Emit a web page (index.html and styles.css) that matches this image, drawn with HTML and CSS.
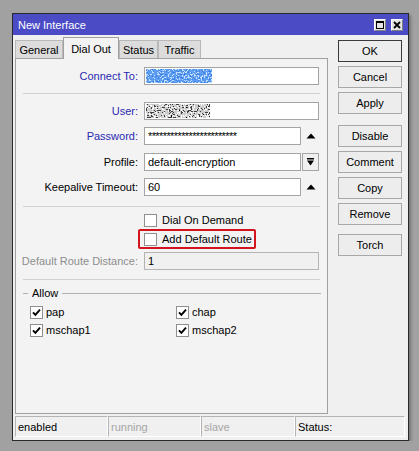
FILE: index.html
```html
<!DOCTYPE html>
<html>
<head>
<meta charset="utf-8">
<title>New Interface</title>
<link rel="stylesheet" href="styles.css">
</head>
<body>
<div class="window">
  <div class="titlebar">
    <span class="title">New Interface</span>
    <svg class="tb-btn" width="12" height="12" viewBox="0 0 12 12">
      <rect x="0" y="0" width="12" height="12" fill="#e4e4e4"/>
      <path d="M0.5 11.5 V0.5 H11.5" fill="none" stroke="#fff"/>
      <path d="M0.5 11.5 H11.5 V0.5" fill="none" stroke="#808080"/>
      <rect x="2.5" y="2.5" width="7" height="7" fill="none" stroke="#000"/>
      <rect x="2" y="2" width="8" height="2" fill="#000"/>
    </svg>
    <svg class="tb-btn" width="12" height="12" viewBox="0 0 12 12">
      <rect x="0" y="0" width="12" height="12" fill="#e4e4e4"/>
      <path d="M0.5 11.5 V0.5 H11.5" fill="none" stroke="#fff"/>
      <path d="M0.5 11.5 H11.5 V0.5" fill="none" stroke="#808080"/>
      <path d="M3 3 L9 9 M9 3 L3 9" stroke="#000" stroke-width="1.8"/>
    </svg>
  </div>

  <div class="content">
    <div class="left">
      <div class="tabs">
        <div class="tab tab-general">General</div>
        <div class="tab tab-dial active">Dial Out</div>
        <div class="tab tab-status">Status</div>
        <div class="tab tab-traffic">Traffic</div>
      </div>

      <div class="panel">
        <div class="row">
          <span class="lbl blue">Connect To:</span>
          <div class="field noisy">
            <svg width="66" height="14" viewBox="0 0 66 14">
              <filter id="noise-blue" x="0" y="0" width="100%" height="100%" color-interpolation-filters="sRGB">
                <feTurbulence type="fractalNoise" baseFrequency="0.6" numOctaves="2" seed="7"/>
                <feColorMatrix type="matrix" values="1 0 0 0 0  1 0 0 0 0  1 0 0 0 0  0 0 0 0 1"/>
                <feComponentTransfer>
                  <feFuncR type="discrete" tableValues="0.15 0.25 0.38 0.78 1"/>
                  <feFuncG type="discrete" tableValues="0.42 0.52 0.62 0.88 1"/>
                  <feFuncB type="discrete" tableValues="0.85 0.9 0.96 1 1"/>
                </feComponentTransfer>
              </filter>
              <rect width="66" height="14" filter="url(#noise-blue)"/>
            </svg>
          </div>
        </div>

        <div class="sep sep-top"></div>

        <div class="row gap8">
          <span class="lbl blue">User:</span>
          <div class="field noisy">
            <svg width="64" height="14" viewBox="0 0 64 14">
              <filter id="noise-gray" x="0" y="0" width="100%" height="100%" color-interpolation-filters="sRGB">
                <feTurbulence type="fractalNoise" baseFrequency="0.6" numOctaves="2" seed="3"/>
                <feColorMatrix type="matrix" values="1 0 0 0 0  1 0 0 0 0  1 0 0 0 0  0 0 0 0 1"/>
                <feComponentTransfer>
                  <feFuncR type="discrete" tableValues="0 0.25 0.8 1 1"/>
                  <feFuncG type="discrete" tableValues="0 0.25 0.8 1 1"/>
                  <feFuncB type="discrete" tableValues="0 0.25 0.8 1 1"/>
                </feComponentTransfer>
              </filter>
              <rect width="64" height="14" filter="url(#noise-gray)"/>
            </svg>
          </div>
        </div>

        <div class="row gap7">
          <span class="lbl blue">Password:</span>
          <div class="field short"><span class="secret">************************</span></div>
          <div class="spin">
            <svg width="10" height="6" viewBox="0 0 10 6"><polygon points="0.5,5.5 9.5,5.5 5,0.5" fill="#000"/></svg>
          </div>
        </div>

        <div class="row gap8">
          <span class="lbl">Profile:</span>
          <div class="field short">default-encryption</div>
          <div class="spin drop">
            <svg width="7" height="8" viewBox="0 0 7 8"><rect x="0" y="0" width="7" height="1.5" fill="#000"/><polygon points="0,2.5 7,2.5 3.5,7.5" fill="#000"/></svg>
          </div>
        </div>

        <div class="row gap7">
          <span class="lbl">Keepalive Timeout:</span>
          <div class="field short">60</div>
          <div class="spin">
            <svg width="10" height="6" viewBox="0 0 10 6"><polygon points="0.5,5.5 9.5,5.5 5,0.5" fill="#000"/></svg>
          </div>
        </div>

        <div class="sep sep-mid"></div>

        <div class="check-line">
          <span class="box"></span><span class="check-text">Dial On Demand</span>
        </div>

        <div class="highlight">
          <span class="box"></span><span class="check-text">Add Default Route</span>
        </div>

        <div class="row gap3">
          <span class="lbl muted">Default Route Distance:</span>
          <div class="field disabled">1</div>
        </div>

        <div class="sep sep-low"></div>

        <div class="legend">Allow</div>

        <div class="allow">
          <div class="opt"><span class="box"><svg width="11" height="11" viewBox="0 0 11 11"><path d="M2 5.3 L4.4 7.8 L9 2.6" fill="none" stroke="#000" stroke-width="1.9"/></svg></span><span>pap</span></div>
          <div class="opt"><span class="box"><svg width="11" height="11" viewBox="0 0 11 11"><path d="M2 5.3 L4.4 7.8 L9 2.6" fill="none" stroke="#000" stroke-width="1.9"/></svg></span><span>chap</span></div>
          <div class="opt"><span class="box"><svg width="11" height="11" viewBox="0 0 11 11"><path d="M2 5.3 L4.4 7.8 L9 2.6" fill="none" stroke="#000" stroke-width="1.9"/></svg></span><span>mschap1</span></div>
          <div class="opt"><span class="box"><svg width="11" height="11" viewBox="0 0 11 11"><path d="M2 5.3 L4.4 7.8 L9 2.6" fill="none" stroke="#000" stroke-width="1.9"/></svg></span><span>mschap2</span></div>
        </div>
      </div>
    </div>

    <div class="buttons">
      <div class="btn default">OK</div>
      <div class="btn">Cancel</div>
      <div class="btn">Apply</div>
      <div class="btn group-start">Disable</div>
      <div class="btn">Comment</div>
      <div class="btn">Copy</div>
      <div class="btn">Remove</div>
      <div class="btn torch">Torch</div>
    </div>
  </div>

  <div class="statusbar">
    <div class="cell cell-a">enabled</div>
    <div class="cell cell-b muted">running</div>
    <div class="cell cell-c muted">slave</div>
    <div class="cell cell-d">Status:</div>
  </div>
</div>
</body>
</html>
```

FILE: styles.css
```css
html, body {
  margin: 0;
}

body {
  background: #a1a1a1;
  font-family: "Liberation Sans", Arial, sans-serif;
  font-size: 11px;
  color: #000;
  padding: 13px 0 0 12px;
}

/* window frame */
.window {
  width: 397px;
  height: 428px;
  box-sizing: border-box;
  border: 1px solid #2a2a2a;
  background: #f0f0f0;
  display: flex;
  flex-direction: column;
  box-shadow: 2px 2px 3px rgba(0, 0, 0, 0.28);
}

.titlebar {
  height: 21px;
  flex: none;
  background: #4b4bc6;
  color: #fff;
  display: flex;
  align-items: center;
  padding: 0 5px;
}

.title {
  flex: 1;
}

.tb-btn {
  display: block;
  margin-left: 5px;
}

.content {
  flex: 1;
  display: flex;
  min-height: 0;
}

/* tabbed area */
.left {
  width: 313px;
  margin-left: 2px;
  padding-top: 2px;
  display: flex;
  flex-direction: column;
}

.tabs {
  display: flex;
  align-items: flex-end;
  height: 21px;
  flex: none;
}

.tab {
  height: 18px;
  box-sizing: border-box;
  border: 1px solid #b8b8b8;
  border-bottom: none;
  background: #dcdcdc;
  display: flex;
  align-items: center;
  justify-content: center;
  white-space: nowrap;
}

.tab.active {
  height: 22px;
  margin-bottom: -1px;
  background: #f3f3f3;
  border-color: #a0a0a0;
  position: relative;
  z-index: 1;
}

.tab-general { width: 48px; }
.tab-dial    { width: 56px; }
.tab-status  { width: 39px; }
.tab-traffic { width: 43px; }

.panel {
  flex: 1;
  border: 1px solid #a0a0a0;
  background: #f3f3f3;
  padding-top: 8px;
  display: flex;
  flex-direction: column;
}

/* form rows */
.row {
  display: flex;
  align-items: center;
  height: 18px;
  flex: none;
}

.gap3 { margin-top: 3px; }
.gap7 { margin-top: 7px; }
.gap8 { margin-top: 8px; }

.lbl {
  width: 122px;
  margin-right: 6px;
  text-align: right;
  flex: none;
  white-space: nowrap;
}

.blue  { color: #2a2ab2; }
.muted { color: #8e8e8e; }

.field {
  box-sizing: border-box;
  height: 18px;
  width: 175px;
  border: 1px solid #a5a5a5;
  background: #fff;
  padding-left: 3px;
  display: flex;
  align-items: center;
  white-space: nowrap;
  overflow: hidden;
  flex: none;
}

.field.short { width: 157px; }
.field.noisy { padding-left: 1px; }
.field.noisy svg { display: block; }

.field.disabled {
  background: #f0f0f0;
  border-color: #b4b4b4;
}

.secret {
  letter-spacing: -0.6px;
}

.spin {
  width: 17px;
  height: 18px;
  margin-left: 1px;
  box-sizing: border-box;
  display: flex;
  align-items: center;
  justify-content: center;
  flex: none;
}

.spin svg { display: block; }

.drop {
  border: 1px solid #a5a5a5;
  background: #f0f0f0;
}

.sep {
  height: 1px;
  background: #d2d2d2;
  margin: 0 7px;
  flex: none;
}

.sep-top { margin-top: 8px; }
.sep-mid { margin-top: 10px; }
.sep-low { margin-top: 9px; }

/* checkboxes */
.box {
  width: 13px;
  height: 13px;
  box-sizing: border-box;
  border: 1px solid #8f8f8f;
  background: #fff;
  flex: none;
  display: flex;
  align-items: center;
  justify-content: center;
}

.box svg { display: block; }

.check-line {
  display: flex;
  align-items: center;
  height: 18px;
  margin: 4px 0 0 128px;
  flex: none;
}

.check-text {
  margin-left: 5px;
  white-space: nowrap;
}

.highlight {
  align-self: flex-start;
  display: flex;
  align-items: center;
  height: 20px;
  box-sizing: border-box;
  margin-left: 122px;
  padding: 0 2px 0 4px;
  border: 2px solid #d3141d;
  border-radius: 2px;
  flex: none;
}

/* "Allow" group */
.legend {
  display: flex;
  align-items: center;
  height: 14px;
  margin: 6px 6px 0 7px;
  flex: none;
}

.legend::before,
.legend::after {
  content: "";
  height: 1px;
  background: #b0b0b0;
}

.legend::before {
  width: 5px;
  margin-right: 4px;
}

.legend::after {
  flex: 1;
  margin-left: 4px;
}

.allow {
  display: grid;
  grid-template-columns: 146px auto;
  margin: 3px 0 0 14px;
}

.opt {
  display: flex;
  align-items: center;
  height: 18px;
}

.opt span + span {
  margin-left: 3px;
}

/* command buttons */
.buttons {
  width: 64px;
  margin-left: 10px;
  padding-top: 5px;
  display: flex;
  flex-direction: column;
  gap: 4px;
}

.btn {
  height: 22px;
  box-sizing: border-box;
  border: 1px solid #a8a8a8;
  background: #ededed;
  display: flex;
  align-items: center;
  justify-content: center;
}

.btn.default { border-color: #3a3a3a; }
.btn.group-start { margin-top: 7px; }
.btn.torch { margin-top: 5px; }

/* status bar */
.statusbar {
  height: 21px;
  margin: 2px 3px 3px 2px;
  display: flex;
  flex: none;
}

.cell {
  box-sizing: border-box;
  border: 1px solid;
  border-color: #b4b4b4 #fff #fff #b4b4b4;
  padding-left: 2px;
  display: flex;
  align-items: center;
  white-space: nowrap;
}

.cell.muted { color: #a6a6a6; }
.cell-a { width: 93px; }
.cell-b { width: 93px; }
.cell-c { width: 94px; }
.cell-d { flex: 1; }
```
